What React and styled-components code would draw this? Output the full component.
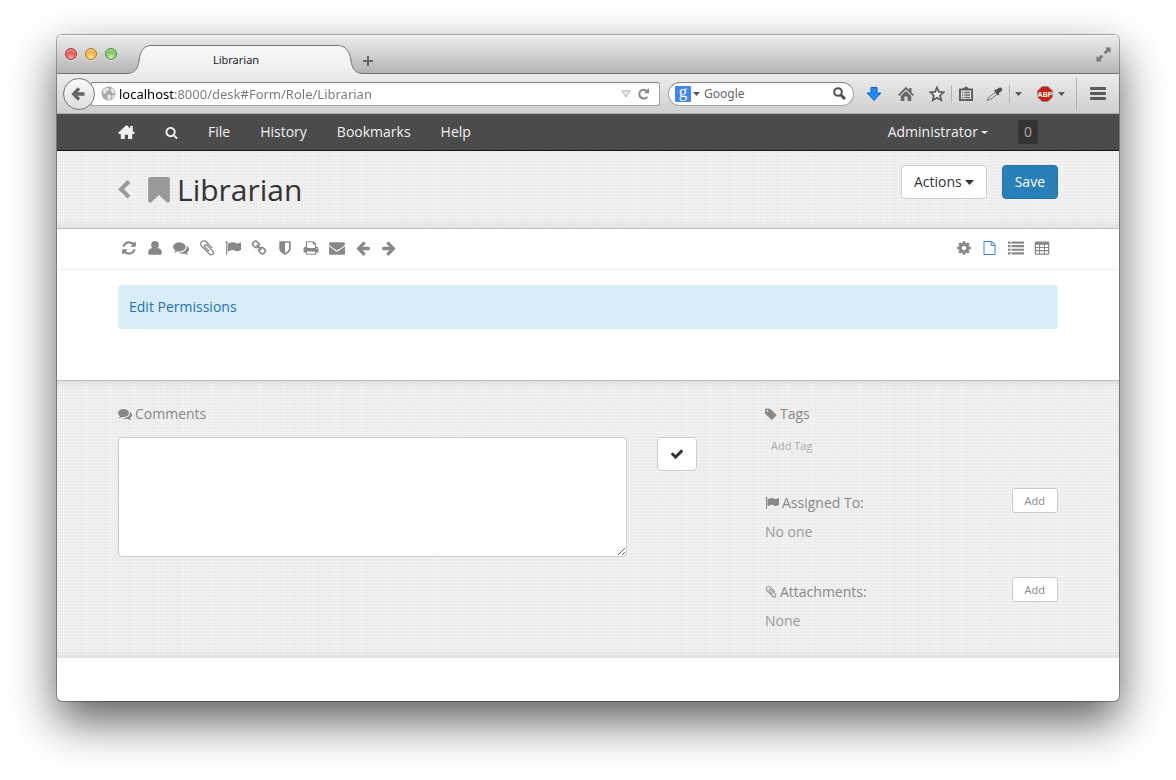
import React from "react";
import styled, { createGlobalStyle, css } from "styled-components";

const ui = '"Open Sans", "Noto Sans", sans-serif';
const chromeFont = '"Noto Sans", "Open Sans", sans-serif';

const GlobalStyle = createGlobalStyle`
  *, *::before, *::after { box-sizing: border-box; }
  body { margin: 0; background: #fff; font: 14px/20px ${ui}; color: #333; }
  button, input, textarea { font-family: inherit; margin: 0; }
  button { cursor: pointer; }
  a { text-decoration: none; }
  svg { display: block; flex: none; }
`;

/* ---------- icons ---------- */

const paths = {
  search: "M1216 832q0-185-131.5-316.5t-316.5-131.5-316.5 131.5-131.5 316.5 131.5 316.5 316.5 131.5 316.5-131.5 131.5-316.5zm512 832q0 52-38 90t-90 38q-54 0-90-38l-343-342q-179 124-399 124-143 0-273.5-55.5t-225-150-150-225-55.5-273.5 55.5-273.5 150-225 225-150 273.5-55.5 273.5 55.5 225 150 150 225 55.5 273.5q0 220-124 399l343 343q37 37 37 90z",
  bookmark: "M1420 128q23 0 44 9 33 13 52.5 41t19.5 62v1289q0 34-19.5 62t-52.5 41q-19 8-44 8-48 0-83-32l-441-424-441 424q-36 33-83 33-23 0-44-9-33-13-52.5-41t-19.5-62v-1289q0-34 19.5-62t52.5-41q21-9 44-9h1048z",
  refresh: "M1639 1056q0 5-1 7-64 268-268 434.5t-478 166.5q-146 0-282.5-55t-243.5-157l-129 129q-19 19-45 19t-45-19-19-45v-448q0-26 19-45t45-19h448q26 0 45 19t19 45-19 45l-137 137q71 66 161 102t187 36q134 0 250-65t186-179q11-17 53-117 8-23 30-23h192q13 0 22.5 9.5t9.5 22.5zm25-800v448q0 26-19 45t-45 19h-448q-26 0-45-19t-19-45 19-45l138-138q-148-137-349-137-134 0-250 65t-186 179q-11 17-53 117-8 23-30 23h-199q-13 0-22.5-9.5t-9.5-22.5v-7q65-268 270-434.5t480-166.5q146 0 284 55.5t245 156.5l130-129q19-19 45-19t45 19 19 45z",
  user: "M896 100c260 0 430 180 430 420 0 150-50 290-130 370 220 40 430 140 450 400v250q0 124-124 124H270q-124 0-124-124v-250c20-260 230-360 450-400-80-80-130-220-130-370 0-240 170-420 430-420z",
  comments: "M1408 768q0 139-94 257t-256.5 186.5-353.5 68.5q-86 0-176-16-124 88-278 128-36 9-86 16h-3q-11 0-20.5-8t-11.5-21q-1-3-1-6.500t.5-6.500 2-6l2.500-5 3.500-5.500 4-5 4.500-5 4-4.500q5-6 23-25t26-29.500 22.500-29 25-38.500 20.500-44q-124-72-195-177t-71-224q0-139 94-257t256.500-186.500 353.500-68.500 353.500 68.500 256.500 186.500 94 257zm384 256q0 120-71 224.500t-195 176.500q10 24 20.500 44t25 38.500 22.500 29 26 29.500 23 25q1 1 4 4.500t4.500 5 4 5 3.500 5.500l2.500 5 2 6 .5 6.500-1 6.500q-3 14-13 22t-22 7q-50-7-86-16-154-40-278-128-90 16-176 16-271 0-472-132 58 4 88 4 161 0 309-45t264-129q125-92 192-212t67-254q0-77-23-152 129 71 204 178t75 230z",
  paperclip: "M1596 1385q0 117-79 196t-196 79q-135 0-235-100l-777-776q-113-115-113-271 0-159 110-270t269-111q158 0 273 113l605 606q10 10 10 22 0 16-30.5 46.5t-46.5 30.5q-13 0-23-10l-606-607q-79-77-181-77-106 0-179 75t-73 181q0 105 76 181l776 777q63 63 145 63 64 0 106-42t42-106q0-82-63-145l-581-581q-26-24-60-24-29 0-48 19t-19 48q0 32 25 59l410 410q10 10 10 22 0 16-31 47t-47 31q-12 0-22-10l-410-410q-63-61-63-149 0-82 57-139t139-57q88 0 149 63l581 581q100 98 100 235z",
  flag: "M320 256q0 72-64 110v1266q0 13-9.5 22.5t-22.5 9.5h-64q-13 0-22.5-9.5t-9.5-22.5v-1266q-64-38-64-110 0-53 37.5-90.5t90.5-37.5 90.5 37.5 37.5 90.5zm1472 64v763q0 25-12.5 38.5t-39.5 27.5q-215 116-369 116-61 0-123.5-22t-108.5-48-115.5-48-142.5-22q-192 0-464 146-17 9-33 9-26 0-45-19t-19-45v-742q0-32 31-55 21-14 79-43 236-120 421-120 107 0 200 29t219 88q38 19 88 19 54 0 117.5-21t110-47 88-47 54.5-21q26 0 45 19t19 45z",
  link: "M1520 1216q0-40-28-68l-208-208q-28-28-68-28-42 0-72 32 3 3 19 18.5t21.5 21.5 15 19 13 25.5 3.5 27.5q0 40-28 68t-68 28q-15 0-27.5-3.5t-25.5-13-19-15-21.5-21.5-18.5-19q-33 31-33 73 0 40 28 68l206 207q27 27 68 27 40 0 68-26l147-146q28-28 28-67zm-703-705q0-40-28-68l-206-207q-28-28-68-28-39 0-68 27l-147 146q-28 28-28 67 0 40 28 68l208 208q27 27 68 27 42 0 72-31-3-3-19-18.5t-21.5-21.5-15-19-13-25.5-3.5-27.5q0-40 28-68t68-28q15 0 27.5 3.5t25.5 13 19 15 21.5 21.5 18.5 19q33-31 33-73zm895 705q0 120-85 203l-147 146q-83 83-203 83-121 0-204-85l-206-207q-83-83-83-203 0-123 88-209l-88-88q-86 88-208 88-120 0-204-84l-208-208q-84-84-84-204t85-203l147-146q83-83 203-83 121 0 204 85l206 207q83 83 83 203 0 123-88 209l88 88q86-88 208-88 120 0 204 84l208 208q84 84 84 204z",
  shield: "M1344 960v-640h-448v1137q119-63 213-137 235-184 235-360zm192-768v768q0 86-33.5 170.5t-83 150-118 127.5-126.5 103-121 77.5-89.5 49.5-42.5 20q-12 6-26 6t-26-6q-16-7-42.5-20t-89.5-49.5-121-77.5-126.5-103-118-127.5-83-150-33.5-170.5v-768q0-26 19-45t45-19h1152q26 0 45 19t19 45z",
  print: "M448 1536h896v-256h-896v256zm0-640h896v-384h-160q-40 0-68-28t-28-68v-160h-640v640zm1152 64q0-26-19-45t-45-19-45 19-19 45 19 45 45 19 45-19 19-45zm128 0v416q0 13-9.5 22.5t-22.5 9.5h-224v160q0 40-28 68t-68 28h-960q-40 0-68-28t-28-68v-160h-224q-13 0-22.5-9.5t-9.5-22.5v-416q0-79 56.5-135.5t135.5-56.5h64v-544q0-40 28-68t68-28h672q40 0 88 20t76 48l152 152q28 28 48 76t20 88v256h64q79 0 135.5 56.5t56.5 135.5z",
  envelope: "M1792 710v794q0 66-47 113t-113 47h-1472q-66 0-113-47t-47-113v-794q44 49 101 87 362 246 497 345 57 42 92.5 65.5t94.5 48 110 24.5h2q51 0 110-24.5t94.5-48 92.5-65.5q170-123 498-345 57-39 100-87zm0-294q0 79-49 151t-122 123q-376 261-468 325-10 7-42.5 31t-54 38.5-52 32.5-57.5 27-50 9h-2q-23 0-50-9t-57.5-27-52-32.5-54-38.5-42.5-31q-91-64-262-182.5t-205-142.5q-62-42-117-115.5t-55-136.5q0-78 41.5-130t118.5-52h1472q65 0 112.5 47t47.5 113z",
  left: "M1664 896v128q0 53-32.5 90.5t-84.5 37.5h-704l293 294q38 36 38 90t-38 90l-75 76q-37 37-90 37-52 0-91-37l-651-652q-37-37-37-90 0-52 37-91l651-650q38-38 91-38 52 0 90 38l75 74q38 38 38 91t-38 91l-293 293h704q52 0 84.5 37.5t32.5 90.5z",
  right: "M1600 960q0 54-37 91l-651 651q-39 37-91 37-51 0-90-37l-75-75q-38-38-38-91t38-91l293-293h-704q-52 0-84.5-37.5t-32.5-90.5v-128q0-53 32.5-90.5t84.5-37.5h704l-293-294q-38-36-38-90t38-90l75-75q38-38 90-38 53 0 91 38l651 651q37 35 37 90z",
  cog: "M1152 896q0-106-75-181t-181-75-181 75-75 181 75 181 181 75 181-75 75-181zm512-109v222q0 12-8 23t-20 13l-185 28q-19 54-39 91 35 50 107 138 10 12 10 25t-9 23q-27 37-99 108t-94 71q-12 0-26-9l-138-108q-44 23-91 38-16 136-29 186-7 28-36 28h-222q-14 0-24.5-8.5t-11.5-21.5l-28-184q-49-16-90-37l-141 107q-10 9-25 9-14 0-25-11-126-114-165-168-7-10-7-23 0-12 8-23 15-21 51-66.5t54-70.5q-27-50-41-99l-183-27q-13-2-21-12.5t-8-23.5v-222q0-12 8-23t19-13l186-28q14-46 39-92-40-57-107-138-10-12-10-24 0-10 9-23 26-36 98.5-107.5t94.5-71.5q13 0 26 10l138 107q44-23 91-38 16-136 29-186 7-28 36-28h222q14 0 24.5 8.5t11.5 21.5l28 184q49 16 90 37l142-107q9-9 24-9 13 0 25 10 129 119 165 170 7 8 7 22 0 12-8 23-15 21-51 66.5t-54 70.5q26 50 41 98l183 28q13 2 21 12.5t8 23.5z",
  file: "M1596 380q28 28 48 76t20 88v1152q0 40-28 68t-68 28h-1344q-40 0-68-28t-28-68v-1600q0-40 28-68t68-28h896q40 0 88 20t76 48zm-444-244v376h376q-10-29-22-41l-313-313q-12-12-41-22zm384 1528v-1024h-416q-40 0-68-28t-28-68v-416h-768v1536h1280z",
  list: "M0 170h300v240H0zM400 170h1392v240H400zM0 570h300v240H0zM400 570h1392v240H400zM0 970h300v240H0zM400 970h1392v240H400zM0 1370h300v240H0zM400 1370h1392v240H400z",
  table: "M230 170H1560q150 0 150 150V1500q0 150-150 150H230q-150 0-150-150V320q0-150 150-150zM220 530v240h340V530zM680 530v240h430V530zM1230 530v240h340V530zM220 890v240h340V890zM680 890v240h430V890zM1230 890v240h340V890zM220 1250v260h340v-260zM680 1250v260h430v-260zM1230 1250v260h340v-260z",
  tag: "M576 448q0-53-37.5-90.5t-90.5-37.5-90.5 37.5-37.5 90.5 37.5 90.5 90.5 37.5 90.5-37.5 37.5-90.5zm1067 576q0 53-37 90l-491 492q-39 37-91 37-53 0-90-37l-715-716q-38-37-64.5-101t-26.5-117v-416q0-52 38-90t90-38h416q53 0 117 26.5t102 64.5l715 714q37 39 37 91z",
  check: "M1671 566q0 40-28 68l-724 724-136 136q-28 28-68 28t-68-28l-136-136-362-362q-28-28-28-68t28-68l136-136q28-28 68-28t68 28l294 295 656-657q28-28 68-28t68 28l136 136q28 28 28 68z",
};

const boxes = {
  file: "-64 -128 2048 2048",
  bookmark: "256 128 1280 1536",
  paperclip: "90 110 1600 1600",
  tag: "128 64 1600 1600",
  list: "0 0 1792 1792",
};

const Glyph = ({ name, size = 16, width }) => (
  <svg
    width={width || size}
    height={size}
    viewBox={boxes[name] || "0 0 1792 1792"}
    fill="currentColor"
    fillRule="evenodd"
    aria-hidden="true"
  >
    <path d={paths[name]} />
  </svg>
);

const HouseIcon = () => (
  <svg width="17" height="16" viewBox="0 0 17 16" fill="currentColor" aria-hidden="true">
    <path d="M8.5 1 0 9l1.2 1.1H2.8V15h4v-4.2h3.2V15h4.2v-4.9h1.5L17 9l-2.2-2.1V2h-2.6v2.4z" />
  </svg>
);

const Caret = ({ w = 7, h = 4 }) => (
  <svg width={w} height={h} viewBox="0 0 8 4" preserveAspectRatio="none" fill="currentColor" aria-hidden="true">
    <path d="M0 0h8L4 4z" />
  </svg>
);

/* ---------- window frame ---------- */

const Page = styled.div`
  padding: 35px 57px 79px;
`;

const Window = styled.div`
  background: #fff;
  border-radius: 5px;
  overflow: hidden;
  box-shadow: 0 0 0 1px rgba(0, 0, 0, 0.3), 0 20px 46px rgba(0, 0, 0, 0.64);
`;

const TitleBar = styled.div`
  display: flex;
  align-items: flex-end;
  height: 39px;
  padding: 0 8px;
  background: linear-gradient(#ebebeb, #d4d4d4 45%, #b2b2b2);
  border-top: 1px solid #f8f8f8;
  box-shadow: inset 0 -1px #6e6e6e;
`;

const Lights = styled.div`
  display: flex;
  gap: 8px;
  align-self: flex-start;
  padding-top: 12px;
`;

const Light = styled.button`
  width: 12px;
  height: 12px;
  padding: 0;
  border: 1px solid ${(p) => p.$edge};
  border-radius: 50%;
  background: radial-gradient(circle at 50% 85%, ${(p) => p.$glow}, ${(p) => p.$fill} 60%);
  box-shadow: inset 0 2px 2px rgba(255, 255, 255, 0.45), 0 1px rgba(255, 255, 255, 0.5);
`;

const Tab = styled.div`
  position: relative;
  width: 234px;
  height: 29px;
  margin-left: 11px;
  padding-right: 18px;
  text-align: center;
  font: 11px/29px ${chromeFont};
  color: #222;
`;

const TabShape = styled.svg`
  position: absolute;
  inset: 0;
`;

const TabLabel = styled.span`
  position: relative;
`;

const BareButton = styled.button`
  display: flex;
  align-items: center;
  justify-content: center;
  gap: 5px;
  padding: 0;
  border: 0;
  background: none;
  color: inherit;
`;

const NewTab = styled(BareButton)`
  width: 12px;
  height: 26px;
  color: #666;
`;

const Expand = styled(BareButton)`
  margin-left: auto;
  align-self: flex-start;
  height: 36px;
`;

const NavBar = styled.div`
  display: flex;
  align-items: center;
  height: 40px;
  padding: 0 1px 0 6px;
  background: linear-gradient(#ececec, #cfcfcf);
  border-bottom: 1px solid #aaa;
  font-family: ${chromeFont};
  color: #5a5a5a;
`;

const Back = styled.button`
  position: relative;
  display: flex;
  align-items: center;
  justify-content: center;
  width: 32px;
  height: 32px;
  padding: 0 2px 0 0;
  border: 1px solid #777;
  border-radius: 50%;
  background: linear-gradient(#fbfbfb, #dedede);
  color: #666;
`;

const field = css`
  display: flex;
  align-items: center;
  height: 24px;
  border: 1px solid #a2a2a2;
  border-top-color: #858585;
  background: linear-gradient(#f6f6f6, #fff 4px);
`;

const AddressField = styled.label`
  ${field}
  flex: 1;
  gap: 3px;
  margin-left: -4px;
  padding: 0 5px 0 9px;
  border-radius: 0 3px 3px 0;
`;

const AddressInput = styled.input`
  flex: 1;
  min-width: 0;
  padding: 0;
  border: 0;
  outline: 0;
  font-size: 13px;
  line-height: 20px;
  font-family: ${chromeFont};
  color: transparent;
  background: linear-gradient(90deg, #000 56px, #777 56px);
  -webkit-background-clip: text;
  background-clip: text;
`;

const SearchField = styled.div`
  ${field}
  width: 186px;
  margin-left: 8px;
  padding: 0 7px 0 6px;
  border-radius: 12px;
`;

const Engine = styled(BareButton)`
  gap: 2px;
`;

const EngineMark = styled.span`
  width: 16px;
  height: 16px;
  border-radius: 1px;
  background: #4285f4;
  color: #fff;
  font: 17px/12px "Liberation Serif", serif;
`;

const SearchInput = styled.input`
  flex: 1;
  min-width: 0;
  margin-left: 4px;
  padding: 0;
  border: 0;
  outline: 0;
  background: none;
  font-size: 12px;
  line-height: 20px;
  font-family: ${chromeFont};
  &::placeholder { color: #666; opacity: 1; }
`;

const Tools = styled.div`
  display: flex;
  align-items: center;
  margin-left: 12px;
`;

const Tool = styled(BareButton)`
  width: ${(p) => p.$w || 32}px;
  height: 24px;
`;

const Divider = styled.span`
  width: 1px;
  height: ${(p) => p.$h || 18}px;
  background: #b4b4b4;
`;

/* ---------- application ---------- */

const Container = styled.div`
  max-width: 940px;
  margin: 0 auto;
  display: flex;
`;

const AppBar = styled.nav`
  background: #4b4b4b;
  border-bottom: 1px solid #111;
  color: #f2f2f2;
`;

const AppRow = styled(Container)`
  align-items: center;
  gap: 30px;
  height: 36px;
`;

const MenuLink = styled.a`
  display: flex;
  align-items: center;
  gap: 3px;
  color: inherit;
`;

const UserLink = styled(MenuLink)`
  margin-left: auto;
`;

const Badge = styled.span`
  margin-right: 20px;
  padding: 2px 6px;
  border-radius: 2px;
  background: #333;
  color: #aaa;
`;

const weave = css`
  background-color: #ebebeb;
  background-image: repeating-linear-gradient(90deg, rgba(255, 255, 255, 0.2) 0 1px, transparent 1px 3px),
    repeating-linear-gradient(rgba(255, 255, 255, 0.26) 0 1px, transparent 1px 3px),
    repeating-linear-gradient(90deg, rgba(255, 255, 255, 0.08) 0 8px, transparent 8px 25px);
`;

const TitleBand = styled.header`
  ${weave}
  border-bottom: 1px solid #c2c2c2;
  box-shadow: inset 0 -6px 8px -6px rgba(0, 0, 0, 0.12);
`;

const TitleRow = styled(Container)`
  align-items: flex-start;
  gap: 15px;
  height: 77px;
  padding-top: 14px;
`;

const Heading = styled.div`
  display: flex;
  align-items: center;
  flex: 1;
  height: 50px;
  color: #999;
`;

const BackLink = styled.a`
  width: 30px;
  color: inherit;
`;

const Title = styled.h1`
  margin: 0 0 0 7px;
  font-size: 30px;
  line-height: 40px;
  font-weight: 400;
  color: #333;
`;

const Button = styled.button`
  display: flex;
  align-items: center;
  justify-content: center;
  gap: 3px;
  height: 34px;
  padding: 0 12px;
  border: 1px solid ${(p) => (p.$primary ? "#2372a8" : "#ccc")};
  border-radius: 4px;
  background: ${(p) => (p.$primary ? "#2980b9" : "#fff")};
  color: ${(p) => (p.$primary ? "#fff" : "#333")};
  font-size: 14px;
  line-height: 20px;
`;

const SmallButton = styled(Button)`
  height: 25px;
  border-radius: 3px;
  color: #888;
  font-size: 11px;
`;

const ToolBand = styled.div`
  border-bottom: 1px solid #eee;
  color: #888;
`;

const ToolRow = styled(Container)`
  justify-content: space-between;
  align-items: center;
  height: 40px;
  padding: 0 8px 2px 3px;
`;

const IconGroup = styled.div`
  display: flex;
  gap: 10px;
`;

const IconButton = styled(BareButton)`
  width: 16px;
  height: 16px;
  color: ${(p) => (p.$active ? "#3d86cb" : "#888")};
`;

const Content = styled.main`
  padding: 15px 0 51px;
`;

const Alert = styled.div`
  flex: 1;
  padding: 12px 11px;
  border-radius: 4px;
  background: #d9edf7;
`;

const AlertLink = styled.a`
  color: #2372b3;
`;

const FootBand = styled.section`
  ${weave}
  border-top: 1px solid #bdbdbd;
  box-shadow: inset 0 6px 8px -6px rgba(0, 0, 0, 0.12), inset 0 -6px 8px -6px rgba(0, 0, 0, 0.12);
  color: #888;
`;

const FootRow = styled(Container)`
  gap: 68px;
  padding: 18px 0 21px;
`;

const Comments = styled.div`
  flex: 1;
`;

const SideColumn = styled.aside`
  display: flex;
  flex-direction: column;
  gap: 29px;
  width: 293px;
`;

const Block = styled.div`
  min-height: 60px;
`;

const BlockHead = styled.div`
  display: flex;
  justify-content: space-between;
  align-items: flex-end;
  height: 25px;
  margin-bottom: 9px;
`;

const BlockTitle = styled.label`
  display: flex;
  align-items: center;
  gap: 3px;
`;

const Muted = styled.div`
  color: #999;
`;

const TagInput = styled.input`
  display: block;
  width: 100%;
  height: 24px;
  padding: 0 6px;
  border: 0;
  background: none;
  font-size: 11px;
  &::placeholder { color: #aaa; opacity: 1; }
`;

const CommentForm = styled.form`
  display: flex;
  align-items: flex-start;
  gap: 30px;
  padding-top: 4px;
`;

const CommentBox = styled.textarea`
  flex: 1;
  height: 120px;
  border: 1px solid #ccc;
  border-radius: 4px;
  background: #fff;
  resize: both;
`;

const BottomSpace = styled.div`
  height: 43px;
`;

const formTools = ["refresh", "user", "comments", "paperclip", "flag", "link", "shield", "print", "envelope", "left", "right"];
const viewTools = ["cog", "file", "list", "table"];

const BrowserChrome = () => (
  <>
    <TitleBar>
      <Lights>
        <Light aria-label="Close" $edge="#a03a37" $fill="#e5433f" $glow="#ffb0a8" />
        <Light aria-label="Minimize" $edge="#a87a2c" $fill="#efa92f" $glow="#ffe9a0" />
        <Light aria-label="Zoom" $edge="#4f8a3c" $fill="#6dba4c" $glow="#d2f5b5" />
      </Lights>
      <Tab>
        <TabShape width="234" height="29" viewBox="0 0 234 29" aria-hidden="true">
          <defs>
            <linearGradient id="tabFill" x1="0" y1="0" x2="0" y2="1">
              <stop offset="0" stopColor="#fafafa" />
              <stop offset="1" stopColor="#ececec" />
            </linearGradient>
          </defs>
          <path
            d="M0 28.5C7 28 10 23 11 16C12 6 16 .5 23 .5H210C217 .5 222 6 223 16C224 23 227 28 234 28.500V30H0z"
            fill="url(#tabFill)"
          />
          <path d="M0 28.5C7 28 10 23 11 16C12 6 16 .5 23 .5H210C217 .5 222 6 223 16C224 23 227 28 234 28.500" fill="none" stroke="#777" />
        </TabShape>
        <TabLabel>Librarian</TabLabel>
      </Tab>
      <NewTab aria-label="New tab">
        <svg width="12" height="12" viewBox="0 0 12 12" stroke="currentColor" strokeWidth="2">
          <path d="M6 1v10M1 6h10" />
        </svg>
      </NewTab>
      <Expand aria-label="Full screen">
        <svg width="15" height="15" viewBox="0 0 15 15" fill="#777">
          <path d="M9 .5h5.5V6l-1.8-1.8-3 3L7.8 5.3l3-3zM6 14.5H.5V9l1.8 1.8 3-3 1.9 1.9-3 3z" />
        </svg>
      </Expand>
    </TitleBar>
    <NavBar>
      <Back aria-label="Back">
        <svg width="14" height="14" viewBox="0 0 15 15" fill="none" stroke="currentColor" strokeWidth="3.500">
          <path d="M8.600 1.500 2.800 7.500 8.600 13.500M3 7.500h11.500" />
        </svg>
      </Back>
      <AddressField>
        <svg width="15" height="15" viewBox="0 0 15 15" aria-hidden="true">
          <circle cx="7.5" cy="7.5" r="7" fill="#aaa" />
          <path d="M2 4.5 5 1.5l3 .8-.5 2-2 1.2-.6 2L2.5 8zM9 3l3-.5 2 4-2 1.2-1.5-2zM6.5 8.5l3 .5 1 2-2 3-2-.8zM11 9.5l2.6-.8-1 3-1.4 1z" fill="#e6e6e6" />
        </svg>
        <AddressInput aria-label="Address" defaultValue="localhost:8000/desk#Form/Role/Librarian" />
        <svg width="10" height="8" viewBox="0 0 10 8" fill="#e8e8e8" stroke="#b5b5b5" aria-hidden="true">
          <path d="M.8.8h8.4L5 7z" />
        </svg>
        <BareButton type="button" aria-label="Reload">
          <svg width="20" height="14" viewBox="0 0 20 14">
            <path d="M13.200 9.800A4.400 4.400 0 1 1 12.800 4" fill="none" stroke="#888" strokeWidth="2" />
            <path d="M15 1v5.200H9.800z" fill="#888" />
          </svg>
        </BareButton>
      </AddressField>
      <SearchField>
        <Engine aria-label="Search engine">
          <EngineMark>g</EngineMark>
          <Caret />
        </Engine>
        <SearchInput aria-label="Search" placeholder="Google" />
        <BareButton aria-label="Search">
          <svg width="13" height="13" viewBox="0 0 13 13" fill="none" stroke="#505050" strokeWidth="2">
            <circle cx="5" cy="5" r="3.8" />
            <path d="M8 8l4 4" strokeWidth="3" />
          </svg>
        </BareButton>
      </SearchField>
      <Tools>
        <Tool $w="16" aria-label="Downloads">
          <svg width="16" height="16" viewBox="0 0 16 16">
            <path d="M5 1.5h6v5.500h3.800L8 14.500 1.200 7H5z" fill="#1e8cff" stroke="#1162b5" />
          </svg>
        </Tool>
        <Tool $w="48" aria-label="Home page">
          <svg width="16" height="16" viewBox="0 0 16 16" fill="#666">
            <path d="M8 .8 0 8.800l1.200 1.100L8 3.500l6.800 6.400L16 8.800l-2.500-2.600V2h-2.200v2z" />
            <path d="M8 5 2.800 9.800V15h3.600v-4.500h3.200V15h3.600V9.800z" />
          </svg>
        </Tool>
        <Tool $w="14" aria-label="Bookmark this page">
          <svg width="16" height="16" viewBox="0 0 16 16" fill="#eee" stroke="#5f5f5f" strokeWidth="1.800">
            <path d="M8 1.500l1.900 4.400 4.800.4-3.600 3.200 1.100 4.700L8 11.700l-4.200 2.500 1.100-4.700L1.300 6.300l4.800-.4z" />
          </svg>
        </Tool>
        <Tool $w="7" as="span" />
        <Divider />
        <Tool $w="27" aria-label="Bookmarks menu">
          <svg width="16" height="16" viewBox="0 0 16 16">
            <path d="M2 3.500h12V14H2z" fill="#eee" stroke="#5f5f5f" strokeWidth="2" />
            <path d="M5 3q3-5 6 0z" fill="#5f5f5f" />
            <path d="M4 6.500h1.500M4 9h1.500M4 11.500h1.500M6.500 6.500H12M6.500 9H12M6.500 11.500H12" stroke="#666" strokeWidth="1.300" />
          </svg>
        </Tool>
        <Tool $w="30" aria-label="Color picker">
          <svg width="17" height="16" viewBox="0 0 17 16">
            <path d="M1 14.500 2.500 11.500l6.500-5 2 2L5 13z" fill="#ddd" stroke="#777" />
            <path d="M8 4.500 9.500 3.200l1.300.6C12 2 13.500 1 15.200 1.700c1.600 1 1.300 3-.8 4.300l-1.600.9.600 1.400-1.500 1.300z" fill="#4c4c4c" />
          </svg>
        </Tool>
        <Divider />
        <Tool $w="16" aria-label="Color picker menu"><Caret /></Tool>
        <Tool $w="50" aria-label="ABP">
          <svg width="16" height="16" viewBox="0 0 16 16">
            <path d="M5 .5h6L15.500 5v6L11 15.500H5L.5 11V5z" fill="#c8200c" stroke="#8f8f8f" />
            <text x="8" y="11" textAnchor="middle" fontFamily="Liberation Sans" fontWeight="700" fontSize="7" fill="#fff">ABP</text>
          </svg>
          <Caret />
        </Tool>
        <Divider $h={32} />
        <Tool $w="41" aria-label="Open menu">
          <svg width="16" height="14" viewBox="0 0 16 14" fill="#5a5a5a">
            <rect width="16" height="3" rx="1" y="0" />
            <rect width="16" height="3" rx="1" y="5" />
            <rect width="16" height="3" rx="1" y="10" />
          </svg>
        </Tool>
      </Tools>
    </NavBar>
  </>
);

export default function App() {
  return (
    <>
      <GlobalStyle />
      <Page>
        <Window>
          <BrowserChrome />
          <AppBar>
            <AppRow>
              <MenuLink href="#home" aria-label="Home"><HouseIcon /></MenuLink>
              <MenuLink href="#search" aria-label="Search"><Glyph name="search" size={13} /></MenuLink>
              <MenuLink href="#file">File</MenuLink>
              <MenuLink href="#history">History</MenuLink>
              <MenuLink href="#bookmarks">Bookmarks</MenuLink>
              <MenuLink href="#help">Help</MenuLink>
              <UserLink href="#user">Administrator <Caret w={7} h={3} /></UserLink>
              <Badge>0</Badge>
            </AppRow>
          </AppBar>
          <TitleBand>
            <TitleRow>
              <Heading>
                <BackLink href="#back" aria-label="Back to list">
                  <svg width="13" height="20" viewBox="0 0 13 20" fill="none" stroke="currentColor" strokeWidth="4">
                    <path d="M11 1.500 3 9.200 11 17" />
                  </svg>
                </BackLink>
                <Glyph name="bookmark" size={26} width={22} />
                <Title>Librarian</Title>
              </Heading>
              <Button>Actions <Caret w={9} h={5} /></Button>
              <Button $primary>Save</Button>
            </TitleRow>
          </TitleBand>
          <ToolBand>
            <ToolRow>
              <IconGroup>
                {formTools.map((n) => (
                  <IconButton key={n} aria-label={n}><Glyph name={n} /></IconButton>
                ))}
              </IconGroup>
              <IconGroup>
                {viewTools.map((n) => (
                  <IconButton key={n} aria-label={n} $active={n === "file"}><Glyph name={n} /></IconButton>
                ))}
              </IconGroup>
            </ToolRow>
          </ToolBand>
          <Content>
            <Container>
              <Alert><AlertLink href="#permissions">Edit Permissions</AlertLink></Alert>
            </Container>
          </Content>
          <FootBand>
            <FootRow>
              <Comments>
                <BlockHead>
                  <BlockTitle htmlFor="comment"><Glyph name="comments" size={14} />Comments</BlockTitle>
                </BlockHead>
                <CommentForm>
                  <CommentBox id="comment" />
                  <Button type="button" aria-label="Add comment"><Glyph name="check" size={14} /></Button>
                </CommentForm>
              </Comments>
              <SideColumn>
                <Block>
                  <BlockHead>
                    <BlockTitle htmlFor="tag"><Glyph name="tag" size={12} />Tags</BlockTitle>
                  </BlockHead>
                  <TagInput id="tag" placeholder="Add Tag" />
                </Block>
                <Block>
                  <BlockHead>
                    <BlockTitle as="span"><Glyph name="flag" size={14} />Assigned To:</BlockTitle>
                    <SmallButton>Add</SmallButton>
                  </BlockHead>
                  <Muted>No one</Muted>
                </Block>
                <Block>
                  <BlockHead>
                    <BlockTitle as="span"><Glyph name="paperclip" size={12} />Attachments:</BlockTitle>
                    <SmallButton>Add</SmallButton>
                  </BlockHead>
                  <Muted>None</Muted>
                </Block>
              </SideColumn>
            </FootRow>
          </FootBand>
          <BottomSpace />
        </Window>
      </Page>
    </>
  );
}
